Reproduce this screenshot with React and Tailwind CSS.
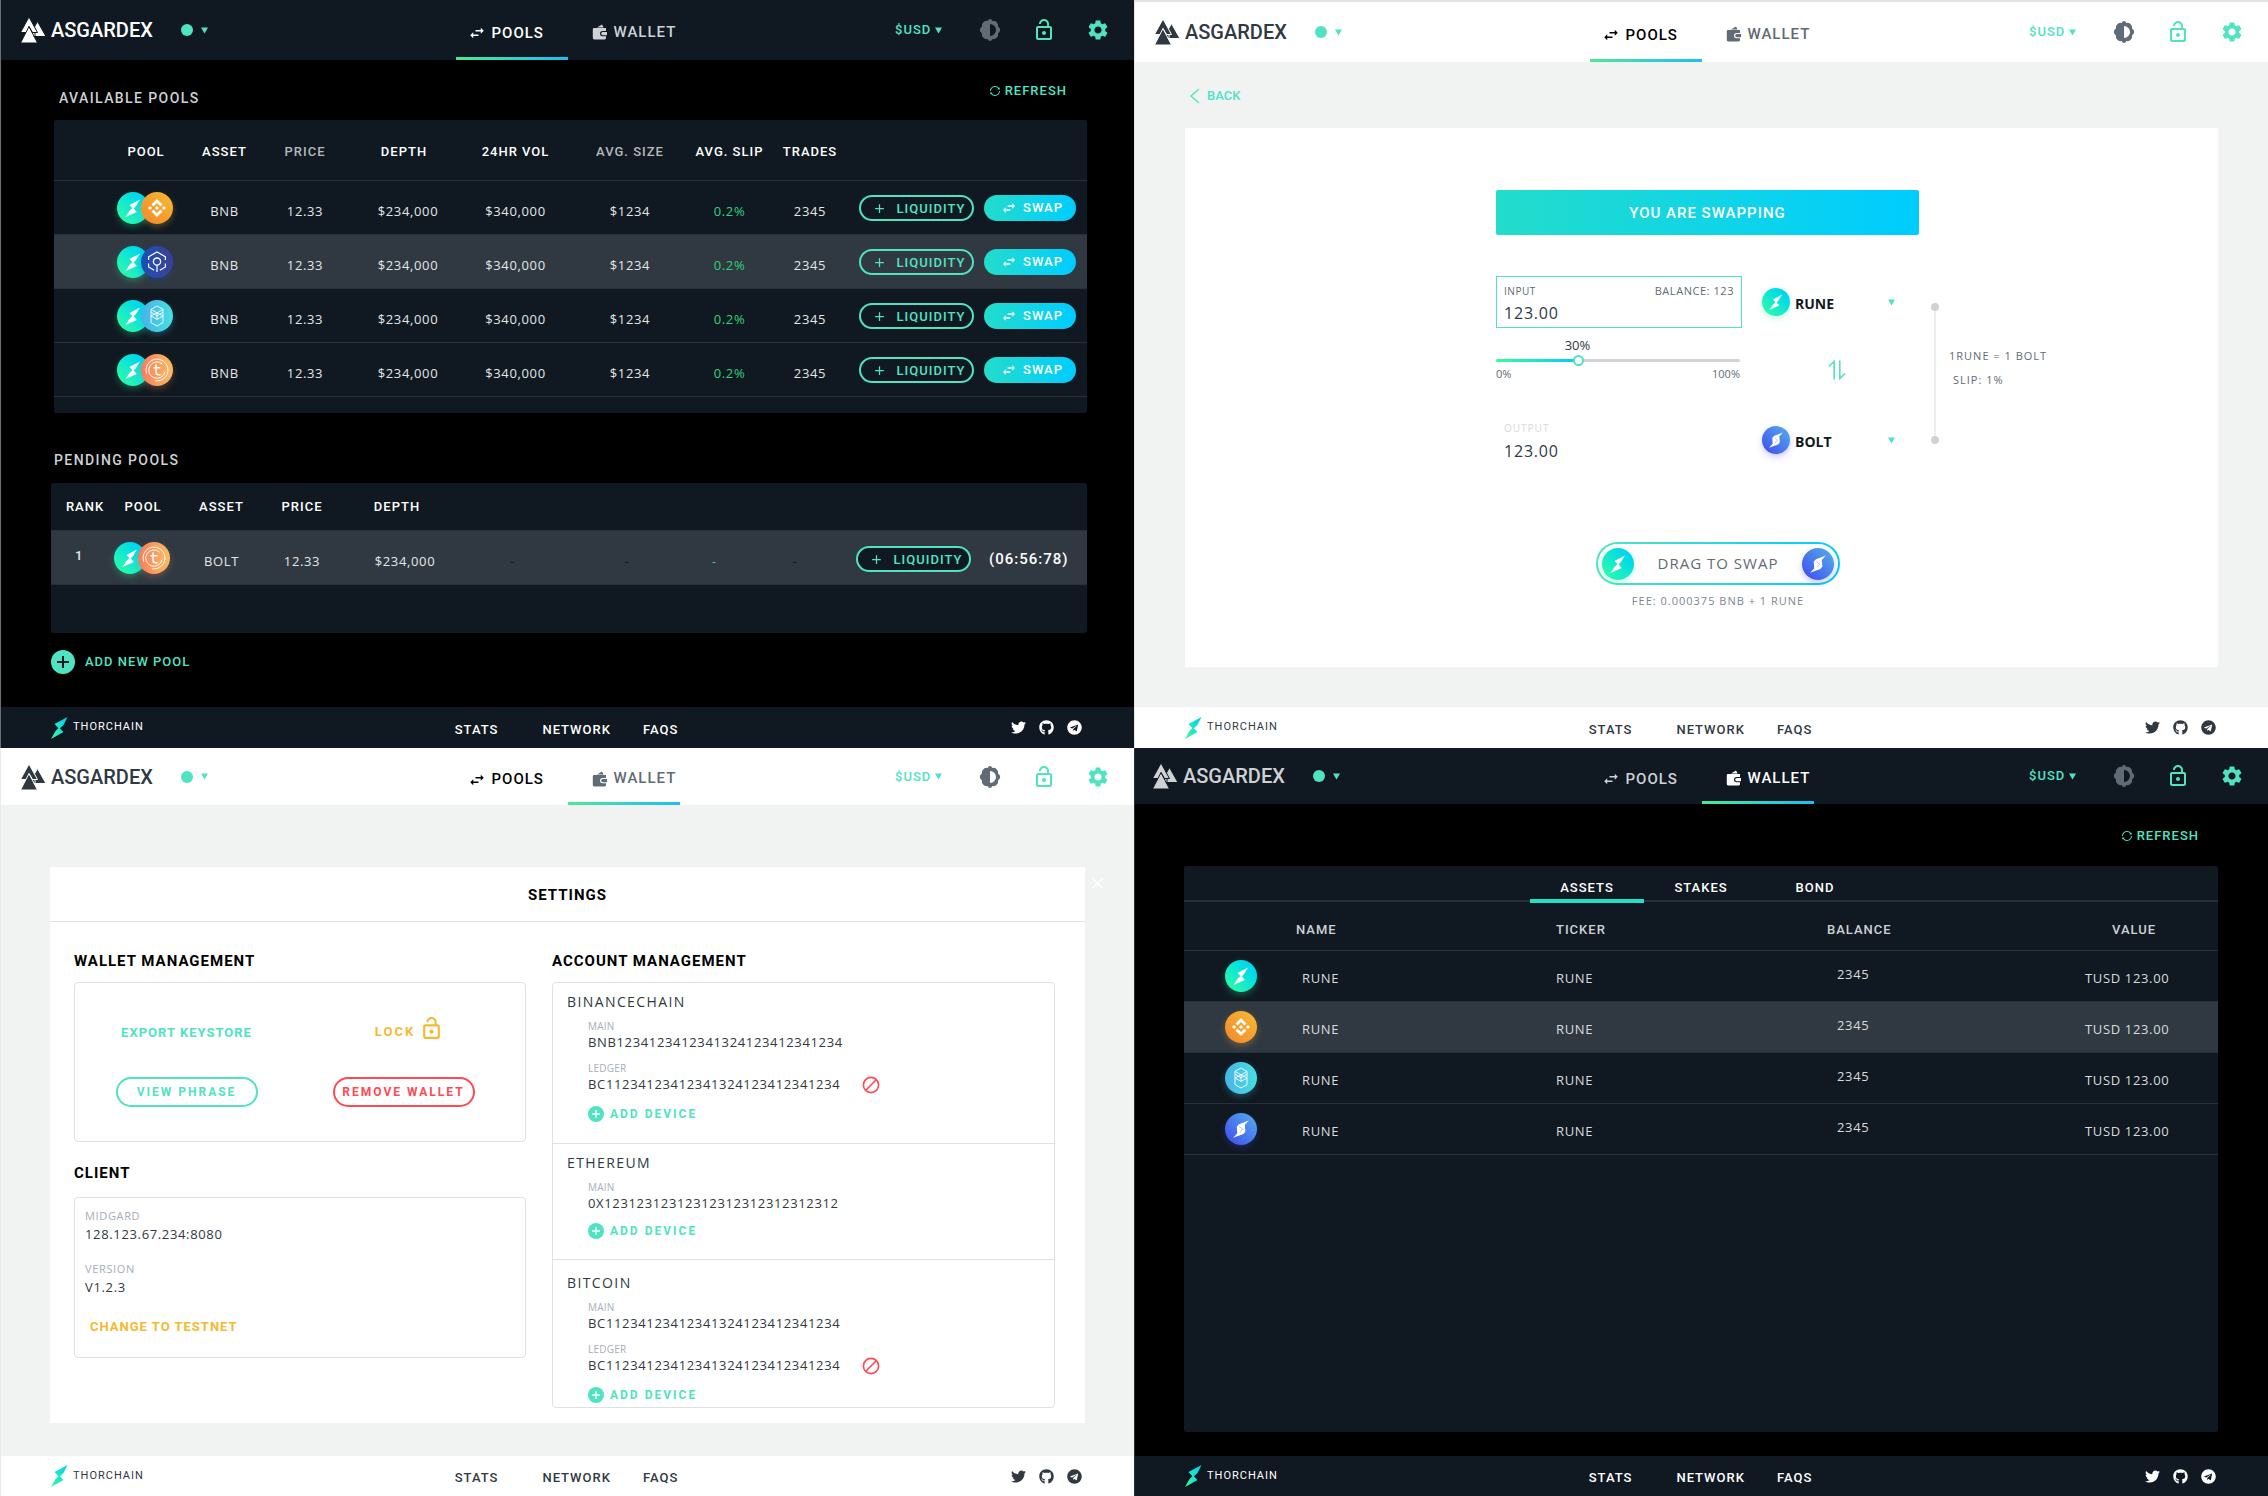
import React from "react";
import { MdLockOpen, MdSettings, MdSwapHoriz, MdAdd } from "react-icons/md";
import { FaTwitter, FaGithub, FaTelegram } from "react-icons/fa";
import { AiOutlineSync } from "react-icons/ai";
import { SiBinance } from "react-icons/si";

const HEAD = "font-['Roboto',sans-serif] font-medium";

/* ---------- icons ---------- */

function Valknut({ gap }) {
  return (
    <svg width="25" height="26" viewBox="0 0 25 26" className="shrink-0" fill="currentColor" stroke={gap} strokeWidth="1" aria-hidden="true">
      <path d="M16.5 4.5 L25 19.5 H8 Z" />
      <path d="M8 0 L16.5 15.5 H-0.5 Z" />
      <path d="M8 9.5 L16.5 26 H-0.5 Z" />
      <path d="M8 9.5 L11.5 15.5 L14 15.5 L14 19.5 H12.8" fill="none" />
    </svg>
  );
}

function Wallet() {
  return (
    <svg width="16" height="16" viewBox="0 0 16 16" className="shrink-0" fill="currentColor" aria-hidden="true">
      <path d="M5 3.4 L10 0.6 L11.6 3.4 Z" />
      <path d="M2 4 H14 V7 H10.6 A2.6 2.6 0 0 0 10.6 12.2 H14 V14 Q14 15.4 12.6 15.4 H2.2 Q0.8 15.4 0.8 14 V5.2 Q0.8 4 2 4 Z" />
      <path d="M10.8 8 H15 V11.2 H10.8 A1.6 1.6 0 0 1 10.8 8 Z" />
    </svg>
  );
}

function Contrast() {
  return (
    <svg width="24" height="24" viewBox="0 0 24 24" fill="currentColor" aria-hidden="true">
      <path
        fillRule="evenodd"
        d="M12 1 Q13.6 1 14.4 3 Q17.4 2.2 18.8 4.4 Q20.6 6 20 8.6 Q22.2 10 22.2 12 Q22.2 14 20 15.4 Q20.6 18 18.8 19.6 Q17.2 21.6 14.4 21 Q13.6 23 12 23 Q10.4 23 9.6 21 Q6.8 21.6 5.2 19.6 Q3.4 18 4 15.4 Q1.8 14 1.8 12 Q1.8 10 4 8.6 Q3.4 6 5.2 4.4 Q6.8 2.2 9.6 3 Q10.4 1 12 1 Z M12 6 V18 A6 6 0 0 0 12 6 Z"
      />
    </svg>
  );
}

function Caret() {
  return (
    <svg width="7" height="7" viewBox="0 0 7 7" className="pointer-events-none shrink-0 text-[#50e3c2]" aria-hidden="true">
      <path d="M0 0.5 H7 L3.5 6.5 Z" fill="currentColor" />
    </svg>
  );
}

function PlusDisc({ size, ink }) {
  return (
    <svg width={size} height={size} viewBox="0 0 24 24" aria-hidden="true">
      <circle cx="12" cy="12" r="12" fill="#50e3c2" />
      <path d="M12 6 V18 M6 12 H18" stroke={ink} strokeWidth="2" />
    </svg>
  );
}

function Ban() {
  return (
    <svg width="18" height="18" viewBox="0 0 18 18" fill="none" stroke="#ff4954" strokeWidth="1.6" aria-hidden="true">
      <circle cx="9" cy="9" r="7.6" />
      <path d="M3.8 14.2 L14.2 3.8" />
    </svg>
  );
}

function ThorMark({ id }) {
  return (
    <svg width="17" height="22" viewBox="0 0 17 22" aria-hidden="true">
      <defs>
        <linearGradient id={id} x1="0" y1="1" x2="1" y2="0">
          <stop offset="0" stopColor="#33ff99" />
          <stop offset="1" stopColor="#00ccff" />
        </linearGradient>
      </defs>
      <path d="M16.5 0 L3.5 7 L8.2 12 L12.5 8 Z M0 22 L12.5 15 L8 10.5 L4.5 14 Z" fill={`url(#${id})`} />
    </svg>
  );
}

const COINS = {
  thor: "bg-linear-to-tr from-[#33ff99] to-[#00ccff] shadow-[0_3px_6px_rgba(51,255,153,0.28)]",
  bnb: "bg-linear-to-tr from-[#f3862f] to-[#f5bb2f] shadow-[0_3px_6px_rgba(243,186,47,0.28)]",
  loki: "bg-linear-to-r from-[#1350b5] to-[#3a4094] shadow-[0_3px_6px_rgba(19,80,181,0.3)]",
  ftm: "bg-linear-to-r from-[#48b3e8] to-[#48dfe0] shadow-[0_3px_6px_rgba(72,190,230,0.28)]",
  tusd: "bg-linear-to-r from-[#f97a5c] to-[#f8bd60] shadow-[0_3px_6px_rgba(249,140,92,0.28)]",
  bolt: "bg-linear-to-tr from-[#4341ee] to-[#5aaee8] shadow-[0_3px_6px_rgba(67,65,238,0.28)]",
};

function CoinGlyph({ kind }) {
  if (kind === "bnb") return <SiBinance className="size-[18px] text-white" aria-hidden="true" />;
  return (
    <svg viewBox="0 0 32 32" className="size-full" fill="none" stroke="#fff" strokeWidth="1" aria-hidden="true">
      {kind === "thor" && (
        <path d="M23 7.5 L12.5 13 L16.2 17 L19 14 Z M8.5 25 L19.8 20 L16 15.6 L12.4 19 Z" fill="#fff" stroke="none" />
      )}
      {kind === "bolt" && (
        <>
          <path d="M23.8 7.5 L14 11.2 L11.8 13.4 L12.2 20.4 L8 24.8 L18.4 21 L20.4 18.6 L19.8 12 Z" fill="#fff" stroke="none" />
          <path d="M14.4 13.6 L17.6 16 L15 19.4" stroke="#9aa9f4" strokeWidth="0.7" />
        </>
      )}
      {kind === "loki" && (
        <>
          <path d="M7.6 14 V10.8 L16 6 L24.4 10.8 V14 M7.6 17.6 V21 L13.2 24.2 M24.4 17.6 V21 L18.8 24.2" strokeWidth="1.2" />
          <circle cx="16" cy="15.6" r="3.6" strokeWidth="1.3" />
          <path d="M16 19.2 V26" strokeWidth="1.2" />
        </>
      )}
      {kind === "ftm" && (
        <path d="M16 6 L22 9.4 V22.6 L16 26 L10 22.6 V9.4 Z M10 9.4 L16 12.8 L22 9.4 M10 16 L16 12.8 L22 16 L16 19.4 Z M16 12.8 V19.4 M10 12 L16 16 L22 12" strokeWidth="0.9" />
      )}
      {kind === "tusd" && (
        <>
          <path d="M5.6 19.6 A11 11 0 1 1 23.6 24" />
          <path d="M21.4 10 A8.2 8.2 0 1 0 24 17.6" />
          <path d="M14 27 Q19.6 27.6 23.6 24" />
          <path d="M15 10.6 V18 Q15 20.8 17.6 20.8 H19.6 M12.4 13.8 H19.4" strokeWidth="1.6" />
        </>
      )}
    </svg>
  );
}

function Coin({ kind, small, overlap }) {
  return (
    <span
      className={`flex shrink-0 items-center justify-center rounded-full ${small ? "size-7" : "size-8"} ${overlap ? "-ml-2" : ""} ${COINS[kind]}`}
    >
      <CoinGlyph kind={kind} />
    </span>
  );
}

/* ---------- shell ---------- */

function Tab({ active, bright, dark, className, children }) {
  const tone = bright ? (dark ? "text-white" : "text-black") : dark ? "text-[#ced2d5]" : "text-[#616b75]";
  return (
    <a href="#" className={`relative flex w-28 items-center text-[15px] tracking-[1px] ${tone} ${className}`}>
      {children}
      {active && <span className="absolute inset-x-0 bottom-0 h-[3px] bg-linear-to-r from-[#4ee890] to-[#1fbcf5]" />}
    </a>
  );
}

function Header({ dark, height, underline, bright, logo }) {
  return (
    <header className={`grid shrink-0 grid-cols-[1fr_auto_1fr] ${height} ${HEAD} ${dark ? "bg-[#101921]" : "bg-white"}`}>
      <div className={`flex items-center ${logo}`}>
        <Valknut gap={dark ? "#101921" : "#ffffff"} />
        <span className="ml-[5px] text-xl">ASGARDEX</span>
        <button type="button" aria-label="Network status" className="ml-7 flex items-center gap-2">
          <span className="size-3 rounded-full bg-[#50e3c2]" />
          <Caret />
        </button>
      </div>
      <nav className="flex" aria-label="Main">
        <Tab dark={dark} active={underline === "pools"} bright={bright === "pools"} className="gap-[6px] pt-[6px] pl-3">
          <MdSwapHoriz size={18} className="shrink-0" aria-hidden="true" />
          POOLS
        </Tab>
        <Tab dark={dark} active={underline === "wallet"} bright={bright === "wallet"} className="gap-[6px] pt-1 pl-6">
          <Wallet />
          WALLET
        </Tab>
      </nav>
      <div className="flex items-center justify-end gap-[30px] pr-6 text-[#50e3c2]">
        <div className="mr-[6px] flex items-center">
          <select aria-label="Currency" className="w-10 appearance-none bg-transparent text-[13px] tracking-[1px]">
            <option>$USD</option>
          </select>
          <Caret />
        </div>
        <button type="button" aria-label="Toggle theme" className="text-[#616b75]">
          <Contrast />
        </button>
        <button type="button" aria-label="Lock wallet">
          <MdLockOpen size={24} />
        </button>
        <button type="button" aria-label="Settings">
          <MdSettings size={24} />
        </button>
      </div>
    </header>
  );
}

function Footer({ dark, id, height }) {
  return (
    <footer
      className={`grid shrink-0 grid-cols-[1fr_auto_1fr] items-center pr-[52px] pl-[50px] ${height} ${HEAD} ${
        dark ? "bg-[#101921] text-white" : "bg-white text-[#303942]"
      }`}
    >
      <a href="#" className="flex items-center gap-[5px] text-[11px] font-normal tracking-[1px]">
        <ThorMark id={`${id}-thor`} />
        THORCHAIN
      </a>
      <nav className="flex pt-1 text-[13px] tracking-[1px]" aria-label="Footer">
        <a href="#" className="mr-11">
          STATS
        </a>
        <a href="#" className="mr-8">
          NETWORK
        </a>
        <a href="#">FAQS</a>
      </nav>
      <div className="flex justify-end gap-[13px]">
        <a href="#" aria-label="Twitter">
          <FaTwitter size={15} />
        </a>
        <a href="#" aria-label="GitHub">
          <FaGithub size={15} />
        </a>
        <a href="#" aria-label="Telegram">
          <FaTelegram size={15} />
        </a>
      </div>
    </footer>
  );
}

function Refresh() {
  return (
    <button type="button" className={`flex items-center gap-1 pt-[2px] text-[13px] tracking-[1px] text-[#50e3c2] ${HEAD}`}>
      <AiOutlineSync size={12} aria-hidden="true" />
      REFRESH
    </button>
  );
}

/* ---------- pools ---------- */

function PoolColumns() {
  return (
    <colgroup>
      <col className="w-14" />
      <col className="w-[72px]" />
      <col className="w-[85px]" />
      <col className="w-[76px]" />
      <col className="w-[122px]" />
      <col className="w-[101px]" />
      <col className="w-32" />
      <col className="w-[71px]" />
      <col className="w-[90px]" />
      <col />
    </colgroup>
  );
}

function LiquidityButton({ fill }) {
  return (
    <button
      type="button"
      className={`flex h-[26px] w-[115px] items-center justify-center gap-[10px] rounded-full border-2 border-[#50e3c2] pt-px pl-1 text-[13px] tracking-[1px] text-[#50e3c2] ${fill} ${HEAD}`}
    >
      <MdAdd size={15} aria-hidden="true" />
      LIQUIDITY
    </button>
  );
}

const POOLS = ["bnb", "loki", "ftm", "tusd"];
const POOL_HEADS = ["", "POOL", "ASSET", "PRICE", "DEPTH", "24HR VOL", "AVG. SIZE", "AVG. SLIP", "TRADES", ""];

function PoolsScreen() {
  return (
    <section className="flex flex-col border-l border-[#6b6f73] bg-black text-white">
      <Header dark height="h-[60px]" underline="pools" bright="pools" logo="pl-5 text-white" />
      <main className="flex-1">
        <div className="flex h-[60px] items-center justify-between pr-[67px] pl-[58px]">
          <h2 className={`pt-4 text-sm tracking-widest text-[#ced2d5] ${HEAD}`}>AVAILABLE POOLS</h2>
          <Refresh />
        </div>
        <div className="mr-[47px] ml-[53px] rounded-xs bg-[#101921] pb-4">
          <table className="w-full table-fixed border-separate border-spacing-0 text-center text-[13px] tracking-wider">
            <PoolColumns />
            <thead>
              <tr>
                {POOL_HEADS.map((h, i) => (
                  <th
                    key={i}
                    className={`h-[61px] border-b border-[#27313a] pt-1 whitespace-nowrap tracking-[1px] ${HEAD} ${
                      h === "PRICE" || h === "AVG. SIZE" ? "text-[#b4b9bd]" : ""
                    }`}
                  >
                    {h}
                  </th>
                ))}
              </tr>
            </thead>
            <tbody>
              {POOLS.map((kind) => (
                <tr
                  key={kind}
                  className={`text-[#e4e6e8] [&>td]:h-[54px] [&>td]:border-b [&>td]:border-[#27313a] ${kind === "loki" ? "bg-[#303942]" : ""}`}
                >
                  <td />
                  <td>
                    <div className="flex justify-center pr-[2px]">
                      <Coin kind="thor" />
                      <Coin kind={kind} overlap />
                    </div>
                  </td>
                  <td className="pt-2">BNB</td>
                  <td className="pt-2">12.33</td>
                  <td className="pt-2 pl-2">$234,000</td>
                  <td className="pt-2">$340,000</td>
                  <td className="pt-2">$1234</td>
                  <td className="pt-2 text-[#2fd27c]">0.2%</td>
                  <td className="pt-2">2345</td>
                  <td>
                    <div className="flex items-center gap-[10px] pt-px pl-1">
                      <LiquidityButton fill="bg-transparent" />
                      <button
                        type="button"
                        className={`flex h-[26px] w-[92px] items-center justify-center gap-[6px] rounded-full bg-linear-to-r from-[#23dcca] to-[#00ccff] pl-1 text-[13px] tracking-[1px] text-white ${HEAD}`}
                      >
                        <MdSwapHoriz size={16} aria-hidden="true" />
                        SWAP
                      </button>
                    </div>
                  </td>
                </tr>
              ))}
            </tbody>
          </table>
        </div>
        <div className="flex h-[70px] items-center pt-6 pl-[53px]">
          <h2 className={`text-sm tracking-widest text-[#ced2d5] ${HEAD}`}>PENDING POOLS</h2>
        </div>
        <div className="mr-[47px] ml-[50px] rounded-xs bg-[#101921] pb-12">
          <table className="w-full table-fixed border-separate border-spacing-0 text-center text-[13px] tracking-wider">
            <PoolColumns />
            <thead>
              <tr>
                {["RANK", "POOL", "ASSET", "PRICE", "DEPTH"].map((h) => (
                  <th
                    key={h}
                    className={`h-12 border-b border-[#27313a] tracking-[1px] ${h === "RANK" ? "pl-3" : ""} ${
                      h === "DEPTH" ? "pr-2" : ""
                    } ${HEAD}`}
                  >
                    {h}
                  </th>
                ))}
                <th colSpan={5} className="border-b border-[#27313a]" />
              </tr>
            </thead>
            <tbody>
              <tr className="bg-[#303942] text-[#e4e6e8] [&>td]:h-[54px] [&>td]:border-b [&>td]:border-[#27313a]">
                <td className={`pb-1 ${HEAD}`}>1</td>
                <td>
                  <div className="flex justify-center pr-[2px]">
                    <Coin kind="thor" />
                    <Coin kind="tusd" overlap />
                  </div>
                </td>
                <td className="pt-2">BOLT</td>
                <td className="pt-2">12.33</td>
                <td className="pt-2 pl-2">$234,000</td>
                <td className="pt-2 text-[#14181c]">-</td>
                <td className="pt-2 text-[#14181c]">-</td>
                <td className="pt-2 pr-6 text-[#2fd27c]">-</td>
                <td className="pt-2 pr-6 text-[#14181c]">-</td>
                <td>
                  <div className={`flex items-center gap-[18px] pt-[3px] pl-1 text-[15px] tracking-[1px] text-white ${HEAD}`}>
                    <LiquidityButton fill="bg-[#101921]" />
                    (06:56:78)
                  </div>
                </td>
              </tr>
            </tbody>
          </table>
        </div>
        <div className="flex h-[57px] items-center pl-[50px]">
          <button type="button" className={`flex items-center gap-[10px] text-[13px] tracking-[1px] text-[#50e3c2] ${HEAD}`}>
            <PlusDisc size={24} ink="#101921" />
            ADD NEW POOL
          </button>
        </div>
      </main>
      <Footer dark id="a" height="h-[41px]" />
    </section>
  );
}

/* ---------- swap ---------- */

function TokenSelect({ kind, name, height }) {
  return (
    <div className={`flex items-center ${height}`}>
      <Coin kind={kind} small />
      <select
        aria-label={`${name} token`}
        className="mt-1 ml-[5px] w-[93px] appearance-none bg-transparent text-sm font-bold text-[#101921]"
      >
        <option>{name}</option>
      </select>
      <Caret />
    </div>
  );
}

function SwapScreen() {
  return (
    <section className="flex flex-col border-t-2 border-l border-[#e3e4e4] bg-[#f1f3f3] text-[#303942]">
      <Header height="h-[60px]" underline="pools" bright="pools" logo="pl-5" />
      <main className="flex flex-1 flex-col">
        <div className="flex h-[66px] items-center pt-[2px] pl-[52px]">
          <a href="#" className={`flex items-center gap-1 text-[13px] text-[#50e3c2] ${HEAD}`}>
            <svg width="16" height="16" viewBox="0 0 16 16" fill="none" stroke="currentColor" strokeWidth="1.4" aria-hidden="true">
              <path d="M12 1 L4 8 L12 15" />
            </svg>
            BACK
          </a>
        </div>
        <div className="mr-[50px] mb-10 ml-[50px] flex-1 bg-white pt-[62px] pl-[311px]">
          <h2
            className={`flex h-[45px] w-[423px] items-center justify-center rounded-xs bg-linear-to-r from-[#23dcca] to-[#00ccff] pt-px text-[15px] tracking-[1px] text-white ${HEAD}`}
          >
            YOU ARE SWAPPING
          </h2>
          <div className="mt-[41px] flex">
            <div className="w-[246px]">
              <div className="border border-[#50e3c2] px-[7px] pt-[6px]">
                <div className="flex h-4 items-center justify-between text-[11px] tracking-wider text-[#616b75]">
                  <label htmlFor="amount-in" className="text-[10px]">
                    INPUT
                  </label>
                  <span>BALANCE: 123</span>
                </div>
                <input
                  id="amount-in"
                  defaultValue="123.00"
                  className="block h-7 w-full bg-transparent text-base tracking-wider text-[#303942] outline-none"
                />
              </div>
              <div className="mt-[9px] flex h-[18px] w-[163px] items-center justify-center text-[13px]">30%</div>
              <input
                type="range"
                aria-label="Share of balance"
                defaultValue="33"
                className="block h-[11px] w-[244px] appearance-none bg-transparent [&::-webkit-slider-runnable-track]:h-[3px] [&::-webkit-slider-runnable-track]:rounded-full [&::-webkit-slider-runnable-track]:bg-[linear-gradient(90deg,#33ff99_0%,#00ccff_33%,#d0d3d8_33%)] [&::-webkit-slider-thumb]:-mt-1 [&::-webkit-slider-thumb]:size-[11px] [&::-webkit-slider-thumb]:appearance-none [&::-webkit-slider-thumb]:rounded-full [&::-webkit-slider-thumb]:border-2 [&::-webkit-slider-thumb]:border-[#50e3c2] [&::-webkit-slider-thumb]:bg-white"
              />
              <div className="flex h-4 w-[244px] items-center justify-between text-[11px] text-[#616b75]">
                <span>0%</span>
                <span>100%</span>
              </div>
              <div className="mt-[38px] px-2">
                <div className="flex h-4 items-center text-[10px] tracking-widest text-[#d5d8db]">OUTPUT</div>
                <output className="flex h-[30px] items-center text-base tracking-wider">123.00</output>
              </div>
            </div>
            <div className="ml-5 w-[133px]">
              <TokenSelect kind="thor" name="RUNE" height="h-[52px]" />
              <div className="flex h-[84px] items-center justify-center pl-4">
                <button type="button" aria-label="Switch direction" className="text-[#50e3c2]">
                  <svg width="18" height="20" viewBox="0 0 18 20" fill="none" stroke="currentColor" strokeWidth="1.6" aria-hidden="true">
                    <path d="M0.8 6.5 L6.2 1.5 V19.5 M17.2 13.5 L11.8 18.5 V0.5" />
                  </svg>
                </button>
              </div>
              <TokenSelect kind="bolt" name="BOLT" height="h-14" />
            </div>
            <div className="mt-[27px] ml-9 flex h-[141px] flex-col items-center">
              <span className="size-2 rounded-full bg-[#ced2d5]" />
              <span className="w-[2px] flex-1 bg-[#eceef0]" />
              <span className="size-2 rounded-full bg-[#ced2d5]" />
            </div>
            <div className="mt-[68px] ml-[10px] text-[11px] leading-6 tracking-[1px] whitespace-nowrap text-[#616b75]">
              <p>1RUNE = 1 BOLT</p>
              <p className="pl-1">SLIP: 1%</p>
            </div>
          </div>
          <div className="mt-[74px] ml-[100px] w-[244px]">
            <button
              type="button"
              className="flex h-[43px] w-full items-center justify-between rounded-full border-2 border-transparent px-1 text-[15px] tracking-[1px] text-[#616b75] [background:linear-gradient(#fff,#fff)_padding-box,linear-gradient(90deg,#50e3c2,#00ccff)_border-box]"
            >
              <Coin kind="thor" />
              DRAG TO SWAP
              <Coin kind="bolt" />
            </button>
            <p className="text-center text-[11px] leading-8 tracking-[1px] whitespace-nowrap text-[#7c8694]">FEE: 0.000375 BNB + 1 RUNE</p>
          </div>
        </div>
      </main>
      <Footer id="b" height="h-[41px]" />
    </section>
  );
}

/* ---------- settings ---------- */

function Address({ label, value, removable, first }) {
  return (
    <div className={first ? "mt-[5px]" : "mt-2"}>
      <div className="h-4 text-[10px] leading-4 tracking-wide text-[#a6adb8]">{label}</div>
      <div className="flex h-[18px] items-center text-[13px] tracking-wider">
        {value}
        {removable && (
          <button type="button" aria-label="Remove device" className="ml-[22px]">
            <Ban />
          </button>
        )}
      </div>
    </div>
  );
}

const LONG = "1234123412341324123412341234";
const ACCOUNTS = [
  { name: "BINANCECHAIN", main: `BNB${LONG}`, ledger: `BC1${LONG}`, pad: "pt-2 pb-[19px] border-b" },
  { name: "ETHEREUM", main: "0X12312312312312312312312312312", pad: "pt-2 pb-[18px] border-b" },
  { name: "BITCOIN", main: `BC1${LONG}`, ledger: `BC1${LONG}`, pad: "pt-3 pb-[2px]" },
];

function SettingsScreen() {
  const strong = "font-['Roboto',sans-serif] font-bold";
  const title = `text-[15px] tracking-[1px] text-black ${strong}`;
  return (
    <section className="flex flex-col border-l border-[#e9eaea] bg-[#f1f3f3] text-[#303942]">
      <Header height="h-[57px]" underline="wallet" bright="pools" logo="pl-5" />
      <main className="flex flex-1 flex-col">
        <div className="relative mt-[62px] mr-[49px] mb-[33px] ml-[49px] flex-1 bg-white">
          <button type="button" aria-label="Close" className="absolute top-[11px] -right-[18px] text-white">
            <svg width="11" height="11" viewBox="0 0 11 11" stroke="currentColor" strokeWidth="1.2" aria-hidden="true">
              <path d="M0.5 0.5 L10.5 10.5 M10.5 0.5 L0.5 10.5" />
            </svg>
          </button>
          <h1 className={`flex h-[55px] items-center justify-center border-b border-[#dfe1e3] pt-[2px] ${title}`}>SETTINGS</h1>
          <div className="grid grid-cols-[452fr_503fr] gap-[26px] pr-[30px] pl-6">
            <div>
              <h2 className={`flex h-[60px] items-center pt-[18px] ${title}`}>WALLET MANAGEMENT</h2>
              <div className={`grid h-40 grid-cols-2 grid-rows-[60px_60px] place-items-center rounded-sm border border-[#dfe1e3] pt-[19px] pr-1 text-[13px] ${strong}`}>
                <button type="button" className="pt-[2px] tracking-[1px] text-[#50e3c2]">
                  EXPORT KEYSTORE
                </button>
                <button type="button" className="flex items-center gap-1 text-[13px] tracking-[2px] text-[#f3ba2f]">
                  LOCK
                  <MdLockOpen size={25} className="mb-2" aria-hidden="true" />
                </button>
                <button type="button" className="h-[30px] w-[142px] rounded-full border-2 border-[#50e3c2] text-xs tracking-[2px] text-[#50e3c2]">
                  VIEW PHRASE
                </button>
                <button type="button" className="mr-3 h-[30px] w-[142px] rounded-full border-2 border-[#ff4954] text-xs tracking-[2px] whitespace-nowrap text-[#ff4954]">
                  REMOVE WALLET
                </button>
              </div>
              <h2 className={`flex h-[55px] items-center pt-2 ${title}`}>CLIENT</h2>
              <div className="h-[161px] rounded-sm border border-[#dfe1e3] pt-[10px] pl-[10px] text-[13px] tracking-wider">
                <div className="h-4 text-[11px] leading-4 text-[#a6adb8]">MIDGARD</div>
                <div className="leading-[20px]">128.123.67.234:8080</div>
                <div className="mt-[17px] h-4 text-[11px] leading-4 text-[#a6adb8]">VERSION</div>
                <div className="leading-[20px]">V1.2.3</div>
                <button type="button" className={`mt-5 ml-[5px] block h-5 text-[13px] tracking-[1px] text-[#f3ba2f] ${strong}`}>
                  CHANGE TO TESTNET
                </button>
              </div>
            </div>
            <div>
              <h2 className={`flex h-[60px] items-center pt-[18px] ${title}`}>ACCOUNT MANAGEMENT</h2>
              <div className="rounded-sm border border-[#dfe1e3]">
                {ACCOUNTS.map((a) => (
                  <div key={a.name} className={`border-[#dfe1e3] pl-[14px] ${a.pad}`}>
                    <h3 className="text-sm leading-[22px] tracking-widest">{a.name}</h3>
                    <div className="pl-[21px]">
                      <Address first label="MAIN" value={a.main} />
                      {a.ledger && <Address label="LEDGER" value={a.ledger} removable />}
                      <button
                        type="button"
                        className={`flex h-5 items-center gap-[6px] text-xs tracking-[2px] text-[#50e3c2] ${
                          a.ledger ? "mt-[10px]" : "mt-2"
                        } ${strong}`}
                      >
                        <PlusDisc size={16} ink="#ffffff" />
                        ADD DEVICE
                      </button>
                    </div>
                  </div>
                ))}
              </div>
            </div>
          </div>
        </div>
      </main>
      <Footer id="c" height="h-10" />
    </section>
  );
}

/* ---------- wallet ---------- */

function WalletScreen() {
  return (
    <section className="flex flex-col border-l border-[#27313a] bg-black text-white">
      <Header dark height="h-14" underline="wallet" bright="wallet" logo="pl-[18px] text-[#ced2d5]" />
      <main className="flex flex-1 flex-col">
        <div className="flex h-[62px] items-center justify-end pr-[69px]">
          <Refresh />
        </div>
        <div className="mr-[50px] mb-6 ml-[49px] flex-1 rounded-xs bg-[#101921]">
          <div className={`flex h-9 justify-center border-b-2 border-[#27313a] text-[13px] tracking-[1px] ${HEAD}`} role="tablist">
            {["ASSETS", "STAKES", "BOND"].map((t, i) => (
              <button
                key={t}
                type="button"
                role="tab"
                aria-selected={i === 0}
                className={`-mb-[3px] w-[114px] border-b-4 pt-[10px] ${i === 0 ? "border-[#21e0c8]" : "border-transparent"}`}
              >
                {t}
              </button>
            ))}
          </div>
          <table className="w-full table-fixed border-separate border-spacing-0 text-left text-[13px] tracking-wider">
            <colgroup>
              <col className="w-28" />
              <col className="w-[260px]" />
              <col className="w-[271px]" />
              <col className="w-[258px]" />
              <col />
            </colgroup>
            <thead>
              <tr className={`text-[#ced2d5] [&>th]:h-[49px] [&>th]:border-b [&>th]:border-[#27313a] [&>th]:pt-2 [&>th]:font-medium [&>th]:tracking-[1px] ${HEAD}`}>
                <th aria-label="Coin" />
                <th>NAME</th>
                <th>TICKER</th>
                <th>BALANCE</th>
                <th className="pl-[27px]">VALUE</th>
              </tr>
            </thead>
            <tbody>
              {["thor", "bnb", "ftm", "bolt"].map((kind) => (
                <tr
                  key={kind}
                  className={`text-[#d9dcdf] [&>td]:h-[51px] [&>td]:border-b [&>td]:border-[#27313a] ${kind === "bnb" ? "bg-[#303942]" : ""}`}
                >
                  <td>
                    <div className="flex justify-center pl-[2px]">
                      <Coin kind={kind} />
                    </div>
                  </td>
                  <td className="pt-[6px] pl-[6px]">RUNE</td>
                  <td className="pt-[6px]">RUNE</td>
                  <td className="pb-[2px] pl-[10px]">2345</td>
                  <td className="pt-[6px]">TUSD 123.00</td>
                </tr>
              ))}
            </tbody>
          </table>
        </div>
      </main>
      <Footer dark id="d" height="h-10" />
    </section>
  );
}

export default function App() {
  return (
    <div className="grid min-h-screen grid-cols-2 grid-rows-2 font-['Open_Sans',sans-serif]">
      <PoolsScreen />
      <SwapScreen />
      <SettingsScreen />
      <WalletScreen />
    </div>
  );
}
